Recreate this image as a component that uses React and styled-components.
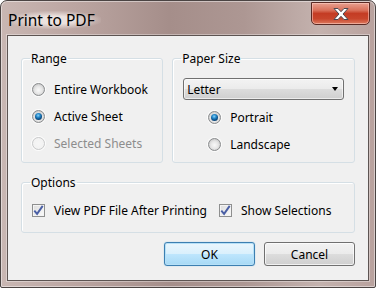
import React from "react";
import styled, { createGlobalStyle } from "styled-components";

const GlobalStyle = createGlobalStyle`
  body {
    margin: 0;
    background: #ffffff;
    font-family: "Noto Sans", "Open Sans", sans-serif;
  }
`;

function CheckMark() {
  return (
    <svg width="11" height="11" viewBox="0 0 11 11">
      <path
        d="M1.3 5.6l2.8 3.3 5.6-8"
        fill="none"
        stroke="#4a5fa5"
        strokeWidth="1.9"
      />
    </svg>
  );
}

function App() {
  return (
    <>
      <GlobalStyle />
      <Window>
        <TitleBar>
          <Title>Print to PDF</Title>
          <CloseButton>
            <svg width="20" height="14" viewBox="0 0 20 14">
              <path
                d="M3 1.5h4l3 3.2 3-3.2h4l-5 5.5 5 5.5h-4l-3-3.2-3 3.2h-4l5-5.5z"
                fill="#ffffff"
                stroke="#4a4a52"
                strokeWidth="1"
                strokeLinejoin="round"
              />
            </svg>
          </CloseButton>
        </TitleBar>
        <Client>
          <Columns>
            <Group $width="143px">
              <Legend>Range</Legend>
              <OptionList>
                <Option>
                  <Radio />
                  <Label>Entire Workbook</Label>
                </Option>
                <Option>
                  <Radio $checked />
                  <Label>Active Sheet</Label>
                </Option>
                <Option>
                  <Radio $disabled />
                  <Label $disabled>Selected Sheets</Label>
                </Option>
              </OptionList>
            </Group>
            <Group $width="184px">
              <Legend>Paper Size</Legend>
              <Select>
                <span>Letter</span>
                <Arrow />
              </Select>
              <OrientationList>
                <Option>
                  <Radio $checked />
                  <Label>Portrait</Label>
                </Option>
                <Option>
                  <Radio />
                  <Label>Landscape</Label>
                </Option>
              </OrientationList>
            </Group>
          </Columns>
          <OptionsGroup>
            <Legend>Options</Legend>
            <CheckRow>
              <Check>
                <CheckBox>
                  <CheckMark />
                </CheckBox>
                <Label>View PDF File After Printing</Label>
              </Check>
              <Check>
                <CheckBox>
                  <CheckMark />
                </CheckBox>
                <Label>Show Selections</Label>
              </Check>
            </CheckRow>
          </OptionsGroup>
          <ButtonRow>
            <Button $default>OK</Button>
            <Button>Cancel</Button>
          </ButtonRow>
        </Client>
      </Window>
    </>
  );
}

export default App;

const Window = styled.div`
  width: 376px;
  height: 288px;
  border: 1px solid #4b4443;
  border-radius: 7px 7px 2px 2px;
  background: linear-gradient(
    90deg,
    #c9b7b3 0%,
    #bba5a1 20%,
    #a58e8a 45%,
    #ad9793 65%,
    #c4b2ae 85%,
    #b9a29e 100%
  );
  box-shadow: inset 0 0 0 1px rgba(255, 255, 255, 0.45);
  display: flex;
  flex-direction: column;
  box-sizing: border-box;
  padding: 0 6px 6px 6px;
`;

const TitleBar = styled.div`
  height: 34px;
  display: flex;
  justify-content: space-between;
  align-items: flex-start;
  flex-shrink: 0;
`;

const Title = styled.div`
  margin-top: 10px;
  margin-left: 1px;
  padding: 0 6px 0 0;
  font-size: 15.5px;
  line-height: 18px;
  color: #000000;
  background: radial-gradient(
    ellipse at center,
    rgba(240, 232, 229, 0.9) 30%,
    rgba(240, 232, 229, 0) 75%
  );
`;

const CloseButton = styled.div`
  width: 59px;
  height: 23px;
  margin-top: 1px;
  margin-right: -1px;
  border: 1px solid #5a2a24;
  border-radius: 0 0 5px 5px;
  box-sizing: border-box;
  background: linear-gradient(
    180deg,
    #e8a090 0%,
    #d9705a 35%,
    #c43c24 50%,
    #c8452c 75%,
    #dd7a5e 100%
  );
  box-shadow: inset 0 0 0 1px rgba(255, 210, 200, 0.55);
  display: flex;
  align-items: center;
  justify-content: center;
`;

const Client = styled.div`
  flex: 1;
  background: #f0f0f0;
  border: 1px solid #5d5452;
  box-shadow: 0 0 0 1px rgba(255, 255, 255, 0.35);
  padding: 15px 13px 0 13px;
  display: flex;
  flex-direction: column;
  color: #000000;
  font-size: 12px;
`;

const Columns = styled.div`
  display: flex;
  gap: 9px;
`;

const Group = styled.fieldset`
  width: ${(p) => p.$width};
  height: 112px;
  box-sizing: border-box;
  margin: 0;
  padding: 0 10px;
  border: 1px solid #d5dfe5;
  border-radius: 3px;
  box-shadow: inset 1px 1px 0 #ffffff;
  display: flex;
  flex-direction: column;
`;

const Legend = styled.legend`
  padding: 0 1px;
  margin-left: -2px;
  font-size: 12px;
  line-height: 15px;
  color: #000000;
`;

const OptionList = styled.div`
  display: flex;
  flex-direction: column;
  padding-top: 10px;
`;

const OrientationList = styled.div`
  display: flex;
  flex-direction: column;
  padding-left: 25px;
  padding-top: 4px;
`;

const Option = styled.div`
  height: 27px;
  display: flex;
  align-items: center;
  gap: 9px;
`;

const Radio = styled.span`
  position: relative;
  width: 13px;
  height: 13px;
  border-radius: 50%;
  flex-shrink: 0;
  box-sizing: border-box;
  border: 1px solid ${(p) => (p.$disabled ? "#c9cacb" : "#8a8c8e")};
  background: ${(p) =>
    p.$disabled
      ? "radial-gradient(circle at 50% 50%, #f6f6f6 0%, #f0f0f0 100%)"
      : "radial-gradient(circle at 50% 55%, #f9f9f9 0%, #e6e6e6 45%, #cbcbcb 75%, #f2f2f2 95%)"};
  box-shadow: 0 0 0 1px rgba(255, 255, 255, 0.8);

  &::after {
    content: "";
    display: ${(p) => (p.$checked ? "block" : "none")};
    position: absolute;
    left: 2px;
    top: 2px;
    width: 7px;
    height: 7px;
    border-radius: 50%;
    background: radial-gradient(
      circle at 45% 35%,
      #8fd3f5 0%,
      #2a8fd0 30%,
      #0b4f88 62%,
      #082a48 100%
    );
  }
`;

const Label = styled.span`
  font-size: 12px;
  line-height: 15px;
  white-space: nowrap;
  color: ${(p) => (p.$disabled ? "#8d8d8d" : "#000000")};
`;

const Select = styled.div`
  margin-top: 12px;
  height: 22px;
  box-sizing: border-box;
  border: 1px solid #707070;
  border-radius: 3px;
  background: linear-gradient(
    180deg,
    #f3f3f3 0%,
    #ebebeb 50%,
    #dddddd 50%,
    #cfcfcf 100%
  );
  box-shadow: inset 0 0 0 1px rgba(255, 255, 255, 0.6);
  display: flex;
  align-items: center;
  justify-content: space-between;
  padding: 0 5px 0 3px;
  font-size: 12px;
`;

const Arrow = styled.span`
  width: 0;
  height: 0;
  border-left: 3.5px solid transparent;
  border-right: 3.5px solid transparent;
  border-top: 4px solid #000000;
`;

const OptionsGroup = styled.fieldset`
  margin: 12px 0 0 0;
  height: 58px;
  box-sizing: border-box;
  padding: 0 10px;
  border: 1px solid #d5dfe5;
  border-radius: 3px;
  box-shadow: inset 1px 1px 0 #ffffff;
`;

const CheckRow = styled.div`
  display: flex;
  align-items: center;
  gap: 12px;
  padding-top: 13px;
`;

const Check = styled.div`
  display: flex;
  align-items: center;
  gap: 9px;
`;

const CheckBox = styled.span`
  width: 13px;
  height: 13px;
  box-sizing: border-box;
  border: 1px solid #8e8f8f;
  background: linear-gradient(135deg, #dcdcdc 0%, #fbfbfb 100%);
  box-shadow: inset 0 0 0 1px #f4f4f4;
  display: flex;
  align-items: center;
  justify-content: center;
  flex-shrink: 0;
`;

const ButtonRow = styled.div`
  display: flex;
  justify-content: flex-end;
  gap: 9px;
  margin-top: 9px;
`;

const Button = styled.button`
  width: 91px;
  height: 24px;
  box-sizing: border-box;
  font-family: "Noto Sans", "Open Sans", sans-serif;
  font-size: 12px;
  color: #000000;
  border: 1px solid ${(p) => (p.$default ? "#3c7fb1" : "#707070")};
  border-radius: 3px;
  background: ${(p) =>
    p.$default
      ? "linear-gradient(180deg, #eaf6fd 0%, #d9f0fc 50%, #bee6fd 50%, #a7d9f5 100%)"
      : "linear-gradient(180deg, #f2f2f2 0%, #ebebeb 50%, #dddddd 50%, #cfcfcf 100%)"};
  box-shadow: ${(p) =>
    p.$default
      ? "inset 0 0 0 1px #b6e0f7, 0 0 1px #5cb7ec"
      : "inset 0 0 0 1px rgba(255, 255, 255, 0.7)"};
  padding: 0;
`;
